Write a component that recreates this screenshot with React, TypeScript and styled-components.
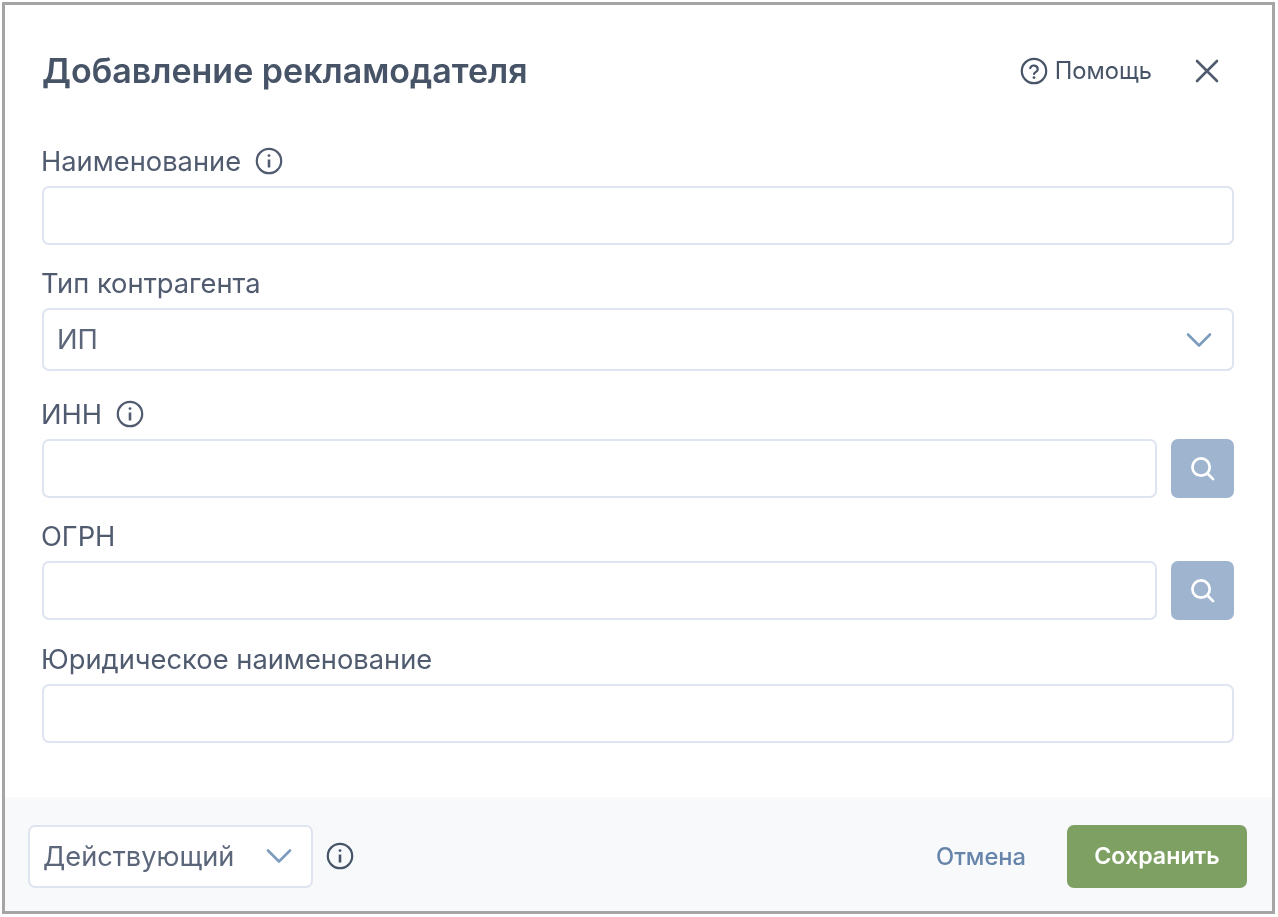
import React from "react";
import styled, { createGlobalStyle } from "styled-components";

const Global = createGlobalStyle`
  html, body { margin: 0; padding: 0; background: #fff; }
  body { font-family: Inter, "Liberation Sans", sans-serif; }
`;
const Page = styled.div`
  width: 1278px; height: 917px; box-sizing: border-box; padding: 2px 3px 3px 2px; background: #fff;
`;
const Frame = styled.div`
  height: 100%; box-sizing: border-box; border: 3px solid #a5a5a5; background: #fff;
  display: flex; flex-direction: column; filter: blur(0.4px);
`;
const Header = styled.header`
  height: 143px; box-sizing: border-box; padding: 0 53px 12px 37px;
  display: flex; align-items: center; justify-content: space-between;
`;
const Title = styled.h1`
  margin: 0; font-size: 34px; font-weight: 600; color: #475467; line-height: 40px;
`;
const HeaderActions = styled.div`
  display: flex; align-items: center; gap: 43px;
`;
const Help = styled.div`
  display: flex; align-items: center; gap: 7px; font-size: 23.7px; color: #475467; line-height: 28px;
`;
const Form = styled.div`
  flex: 1; padding: 0 38px 0 37px; display: flex; flex-direction: column;
`;
const Field = styled.div<{ $gap?: number }>`
  display: flex; flex-direction: column; margin-bottom: ${p => p.$gap ?? 25}px;
`;
const Label = styled.div`
  height: 39px; margin: -1px 0 0 -1px; display: flex; align-items: flex-start; gap: 14px;
  font-size: 27.3px; line-height: 30px; color: #505b70;
`;
const InputRow = styled.div`
  display: flex; gap: 14px;
`;
const Input = styled.div<{ $h?: number }>`
  flex: 1; height: ${p => p.$h ?? 59}px; box-sizing: border-box; border: 2px solid #dee4f0; border-radius: 7px; background: #fff;
  display: flex; align-items: center; justify-content: space-between; padding: 0 20px 0 13px;
  font-size: 27.3px; color: #5b667a;
`;
const SearchButton = styled.div`
  width: 63px; height: 59px; border-radius: 7px; background: #9fb4cf;
  display: flex; align-items: center; justify-content: center;
`;
const Footer = styled.footer`
  height: 114px; box-sizing: border-box; background: #f8f9fb; padding: 4px 25px 0 23px;
  display: flex; align-items: center; justify-content: space-between; flex-shrink: 0;
`;
const FooterLeft = styled.div`
  display: flex; align-items: center; gap: 13px;
`;
const StatusSelect = styled.div`
  width: 285px; height: 63px; box-sizing: border-box; border: 2px solid #dee4f0; border-radius: 7px; background: #fff;
  display: flex; align-items: center; justify-content: space-between; padding: 0 19px 0 13px;
  font-size: 27.2px; color: #5b667a;
`;
const FooterRight = styled.div`
  display: flex; align-items: center; gap: 41px;
`;
const Cancel = styled.div`
  font-size: 23.7px; font-weight: 500; color: #6784ab;
`;
const Save = styled.div`
  width: 180px; height: 63px; border-radius: 7px; background: #7ea163; color: #fff;
  display: flex; align-items: center; justify-content: center; font-size: 23.2px; font-weight: 600;
`;

const InfoIcon = ({ color = "#505b70" }: { color?: string }) => (
  <svg width="28" height="28" viewBox="0 0 28 28" fill="none" stroke={color} strokeWidth="2.2">
    <circle cx="14" cy="14" r="12.2" />
    <circle cx="14" cy="8.6" r="1.4" fill={color} stroke="none" />
    <path d="M14 12.5v8" strokeWidth="2.6" />
  </svg>
);
const HelpIcon = () => (
  <svg width="28" height="28" viewBox="0 0 28 28" fill="none" stroke="#475467" strokeWidth="2.2">
    <circle cx="14" cy="14" r="12.2" />
    <path d="M10.2 11.2a3.9 3.9 0 0 1 7.6 1c0 2.6-3.8 3-3.8 4.8" strokeLinecap="round" />
    <circle cx="14" cy="20.6" r="1.4" fill="#475467" stroke="none" />
  </svg>
);
const CloseIcon = () => (
  <svg width="24" height="24" viewBox="0 0 24 24" fill="none" stroke="#505b70" strokeWidth="2.6" strokeLinecap="round">
    <path d="M2 2l20 20M22 2L2 22" />
  </svg>
);
const Chevron = () => (
  <svg width="26" height="16" viewBox="0 0 26 16" fill="none" stroke="#7c9cbd" strokeWidth="2.6" strokeLinecap="round" strokeLinejoin="round">
    <path d="M2 2.5l11 11 11-11" />
  </svg>
);
const SearchIcon = () => (
  <svg width="25" height="25" viewBox="0 0 26 26" fill="none" stroke="#fff" strokeWidth="2.8" strokeLinecap="round">
    <circle cx="11.5" cy="11.5" r="9" />
    <path d="M18.5 18.5l5.5 5.5" />
  </svg>
);

export default function App() {
  return (
    <>
      <Global />
      <Page>
        <Frame>
          <Header>
            <Title>Добавление рекламодателя</Title>
            <HeaderActions>
              <Help><HelpIcon />Помощь</Help>
              <CloseIcon />
            </HeaderActions>
          </Header>
          <Form>
            <Field>
              <Label>Наименование <InfoIcon /></Label>
              <InputRow><Input /></InputRow>
            </Field>
            <Field $gap={30}>
              <Label>Тип контрагента</Label>
              <InputRow><Input $h={63}>ИП<Chevron /></Input></InputRow>
            </Field>
            <Field>
              <Label>ИНН <InfoIcon /></Label>
              <InputRow><Input /><SearchButton><SearchIcon /></SearchButton></InputRow>
            </Field>
            <Field $gap={26}>
              <Label>ОГРН</Label>
              <InputRow><Input /><SearchButton><SearchIcon /></SearchButton></InputRow>
            </Field>
            <Field>
              <Label>Юридическое наименование</Label>
              <InputRow><Input /></InputRow>
            </Field>
          </Form>
          <Footer>
            <FooterLeft>
              <StatusSelect>Действующий<Chevron /></StatusSelect>
              <InfoIcon color="#475467" />
            </FooterLeft>
            <FooterRight>
              <Cancel>Отмена</Cancel>
              <Save>Сохранить</Save>
            </FooterRight>
          </Footer>
        </Frame>
      </Page>
    </>
  );
}
